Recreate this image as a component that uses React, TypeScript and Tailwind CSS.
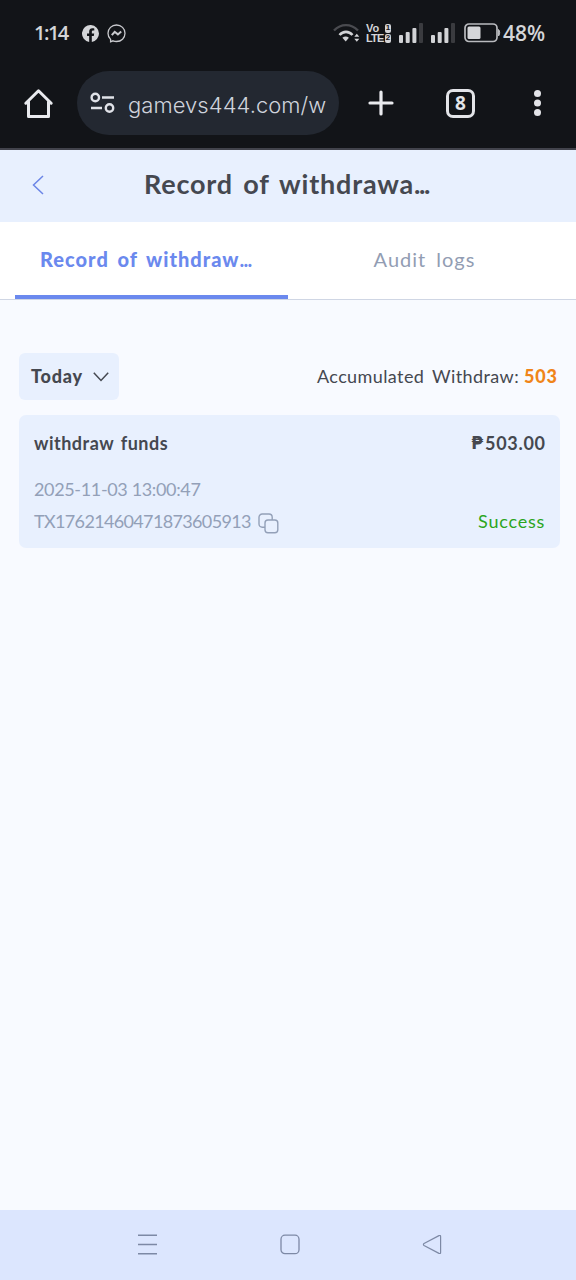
import React from 'react';

interface WithdrawRecord {
  title: string;
  amount: string;
  time: string;
  orderId: string;
  status: string;
}

const records: WithdrawRecord[] = [
  {
    title: 'withdraw funds',
    amount: '503.00',
    time: '2025-11-03 13:00:47',
    orderId: 'TX17621460471873605913',
    status: 'Success'
  }
];

const SignalBars = () => (
  <svg width="24" height="20" viewBox="0 0 24 20" fill="#d2d3d6">
    <rect x="0" y="12" width="4" height="8" rx="1" />
    <rect x="6.7" y="9" width="4" height="11" rx="1" />
    <rect x="13.4" y="5" width="4" height="15" rx="1" />
    <rect x="20" y="0" width="4" height="20" rx="1" fill="#3a3b3f" />
  </svg>
);

const StatusBar = () => (
  <div className="flex h-[66px] items-center pl-[34px] pr-[30px] text-[#d4d5d8]">
    <span className="w-[48px] whitespace-nowrap font-['Open_Sans'] text-[20px] font-semibold leading-none tracking-[-1.5px]">1:14</span>
    <svg width="17" height="17" viewBox="0 0 24 24" fill="#d4d5d8">
      <path d="M24 12a12 12 0 1 0-13.9 11.85v-8.4H7.1V12h3V9.4c0-3 1.8-4.7 4.55-4.7 1.3 0 2.7.25 2.7.25v2.95h-1.55c-1.5 0-1.9.9-1.9 1.9V12h3.3l-.55 3.45h-2.8v8.4A12 12 0 0 0 24 12z" />
    </svg>
    <svg className="ml-[8px]" width="19" height="19" viewBox="0 0 19 19" fill="none" stroke="#c9cace">
      <path d="M9.5 1C4.7 1 1 4.6 1 9.3c0 2.4 1 4.6 2.6 6.1v2.4l2.4-1c1 .4 2.2.7 3.5.7 4.8 0 8.5-3.5 8.5-8.2S14.3 1 9.5 1z" strokeWidth="1.3" />
      <path d="M4.8 11.2 7.7 7.8l3.2 2.6 3.3-2.8" strokeWidth="2" />
    </svg>

    <svg className="ml-auto" width="27" height="20" viewBox="0 0 27 20" fill="none">
      <path d="M1 7.5C8 .3 18 .3 25 7.5" stroke="#4a4b50" strokeWidth="2.4" />
      <path d="M6.5 12c3.7-4.2 9.3-4.2 13 0" stroke="#d2d3d6" strokeWidth="2.6" />
      <path d="M9.4 14.8c2-1.9 4.5-1.9 6.5 0l-3.2 3.7z" fill="#d2d3d6" />
      <path d="M21.3 13.7l2.5-2.9 2.5 2.9zM21.3 15.8h5l-2.5 2.9z" fill="#d2d3d6" />
    </svg>
    <div className="ml-[6px] flex w-[25px] flex-col font-['Liberation_Sans'] text-[11px] font-bold leading-[10px]">
      <div className="flex items-center justify-between">
        <span>Vo</span>
        <span className="flex h-[9px] w-[6px] items-center justify-center rounded-[2px] bg-[#d4d5d8] text-[8px] leading-none text-[#121418]">1</span>
      </div>
      <div className="flex items-center justify-between">
        <span className="tracking-[-0.8px]">LTE</span>
        <span className="flex h-[9px] w-[6px] items-center justify-center rounded-[2px] bg-[#d4d5d8] text-[8px] leading-none text-[#121418]">2</span>
      </div>
    </div>
    <div className="ml-[8px] flex gap-[8px]">
      <SignalBars />
      <SignalBars />
    </div>
    <svg className="ml-[9px]" width="37" height="20" viewBox="0 0 37 20" fill="none">
      <rect x="1" y="1" width="32" height="17.5" rx="4" stroke="#b9babe" strokeWidth="1.7" />
      <rect x="3.5" y="3.5" width="13" height="12.5" rx="1.5" fill="#d4d5d8" />
      <path d="M34.5 6.5c1.6 1 1.6 5.5 0 6.5z" fill="#b9babe" stroke="#b9babe" />
    </svg>
    <span className="ml-[2px] w-[43px] whitespace-nowrap font-['Open_Sans'] text-[21px] font-semibold leading-none">48%</span>
  </div>
);

const BrowserBar = () => (
  <div className="mt-[5px] flex h-16 items-center text-[#e3e4e8]">
    <svg className="ml-[23px]" width="31" height="31" viewBox="0 0 31 31" fill="none" stroke="#e9eaee" strokeWidth="3" strokeLinejoin="round" strokeLinecap="round">
      <path d="M2.8 15.2 15.5 2.8l12.7 12.4M5.5 13.5v15h20v-15" />
    </svg>
    <div className="ml-[23px] flex h-16 w-[262px] items-center rounded-full bg-[#232831] pl-[13px]">
      <svg width="25" height="22" viewBox="0 0 25 22" fill="none" stroke="#e0e2e8" strokeWidth="2.4">
        <circle cx="5.3" cy="5.5" r="3.7" />
        <circle cx="19.5" cy="16" r="3.7" />
        <path d="M12 5.5h12M1 16h11" />
      </svg>
      <span className="ml-[13px] mt-[3px] whitespace-nowrap font-['Inter'] text-[22px] font-light leading-none tracking-[0.05px] text-[#cfd3dc]">gamevs444.com/w</span>
    </div>
    <svg className="ml-[29px]" width="26" height="26" viewBox="0 0 26 26" stroke="#e9eaee" strokeWidth="3.2" strokeLinecap="round">
      <path d="M13 2v22M2 13h22" />
    </svg>
    <div className="ml-[52px] flex h-[29px] w-[29px] items-center justify-center rounded-[7px] border-3 border-[#e3e4e8] font-['Open_Sans'] text-[19px] font-bold leading-none">8</div>
    <svg className="ml-[58px]" width="9" height="26" viewBox="0 0 9 26" fill="#e3e4e8">
      <circle cx="4.5" cy="3.5" r="3.5" />
      <circle cx="4.5" cy="13" r="3.5" />
      <circle cx="4.5" cy="22.5" r="3.5" />
    </svg>
  </div>
);

const RecordCard = ({ record }: { record: WithdrawRecord }) => (
  <div className="mx-[19px] mt-[15px] h-[133px] w-[541px] rounded-[7px] bg-[#e8f0fe] px-[15px] text-[18px] leading-[22px]">
    <div className="flex justify-between pt-[17px] font-bold text-[#454850]">
      <span className="tracking-[0.5px] [word-spacing:2px]">{record.title}</span>
      <span className="flex items-center">
        <span className="mr-[2px] font-['DejaVu_Sans'] text-[17px]">₱</span>
        <span className="mr-[-0.7px] tracking-[0.7px]">{record.amount}</span>
      </span>
    </div>
    <div className="mt-[24px] tracking-[-0.35px] text-[#93a0b8]">{record.time}</div>
    <div className="mt-[10px] flex text-[#93a0b8]">
      <span className="w-[217px] tracking-[-0.65px]">{record.orderId}</span>
      <svg className="ml-[7px] mt-[3px]" width="21" height="21" viewBox="0 0 21 21" fill="none" stroke="#93a0b8" strokeWidth="1.4">
        <path d="M7 14.2H4.2A3.2 3.2 0 0 1 1 11V4.2A3.2 3.2 0 0 1 4.2 1H11a3.2 3.2 0 0 1 3.2 3.2V7" />
        <rect x="7" y="7" width="12.8" height="12.8" rx="3" />
      </svg>
      <span className="ml-auto mr-[-0.2px] tracking-[0.8px] text-[#2ba51d]">{record.status}</span>
    </div>
  </div>
);

const App = () => {
  return (
    <div className="flex h-[1280px] w-[576px] flex-col overflow-hidden bg-[#f8faff] font-['Lato',sans-serif]">
      <header className="h-[150px] border-b-2 border-[#42434c] bg-[#121418]">
        <StatusBar />
        <BrowserBar />
      </header>

      <div className="flex h-[72px] items-center bg-[#e8f0fe] pb-[3px]">
        <svg className="ml-[32px]" width="12" height="20" viewBox="0 0 12 20" fill="none" stroke="#6b85e6" strokeWidth="1.5">
          <path d="M11 1 1.5 10 11 19" />
        </svg>
        <h1 className="mb-[2px] ml-[100px] whitespace-nowrap text-[27px] font-bold leading-none tracking-[0.8px] text-[#454850] [word-spacing:3px]">
          Record of withdrawa<span className="tracking-[-1.4px]">...</span>
        </h1>
      </div>

      <div className="flex h-[78px] border-b border-[#cfd6e4] bg-white px-[15px] text-[20px] leading-none">
        <div className="flex h-[77px] w-[273px] border-b-4 border-[#6b89ee] pl-[25px] pt-[27px] font-black text-[#6b89ee]">
          <span className="whitespace-nowrap tracking-[1px] [word-spacing:3px]">
            Record of withdraw<span className="font-bold tracking-[-0.8px]">...</span>
          </span>
        </div>
        <div className="flex w-[273px] justify-center pt-[27px] tracking-[1px] text-[#929db3] [word-spacing:4px]">Audit logs</div>
      </div>

      <div className="mt-[53px] flex h-[47px] items-center justify-between pl-[19px] pr-[19px] text-[18px] leading-none">
        <div className="flex h-[47px] w-[100px] items-center rounded-[6px] bg-[#e8f0fe] pl-[12px] font-black text-[#454850]">
          <span className="mb-[2px] w-[52px] tracking-[0.8px]">Today</span>
          <svg className="ml-[10px]" width="16" height="10" viewBox="0 0 16 10" fill="none" stroke="#454850" strokeWidth="1.5">
            <path d="M.8.8 8 8.5 15.2.8" />
          </svg>
        </div>
        <div className="mb-[2px] whitespace-nowrap tracking-[0.4px] text-[#454850]">
          <span className="[word-spacing:3px]">Accumulated Withdraw:</span> <span className="mr-[-0.8px] font-black tracking-[0.8px] text-[#f08519]">503</span>
        </div>
      </div>

      {records.map((record) => (
        <RecordCard key={record.orderId} record={record} />
      ))}

      <nav className="mt-auto flex h-[70px] items-center bg-[#dce6fe] pb-px">
        <svg className="ml-[137px]" width="21" height="21" viewBox="0 0 21 21" stroke="#7d89a5" strokeWidth="1.5">
          <path d="M1 1.2h19M1 10.5h19M1 19.7h19" />
        </svg>
        <svg className="ml-[122px]" width="20" height="21" viewBox="0 0 20 21" fill="none" stroke="#7d89a5" strokeWidth="1.3">
          <rect x="1" y="1.2" width="18" height="18.5" rx="4" />
        </svg>
        <svg className="ml-[122px]" width="21" height="21" viewBox="0 0 21 21" fill="none" stroke="#7d89a5" strokeWidth="1.2" strokeLinejoin="round">
          <path d="M2 9.5 17 1.6q1.6-.5 1.6 1v15.8q0 1.5-1.6 1L2 11.5q-1.2-1 0-2z" />
        </svg>
      </nav>
    </div>
  );
};

export default App;
